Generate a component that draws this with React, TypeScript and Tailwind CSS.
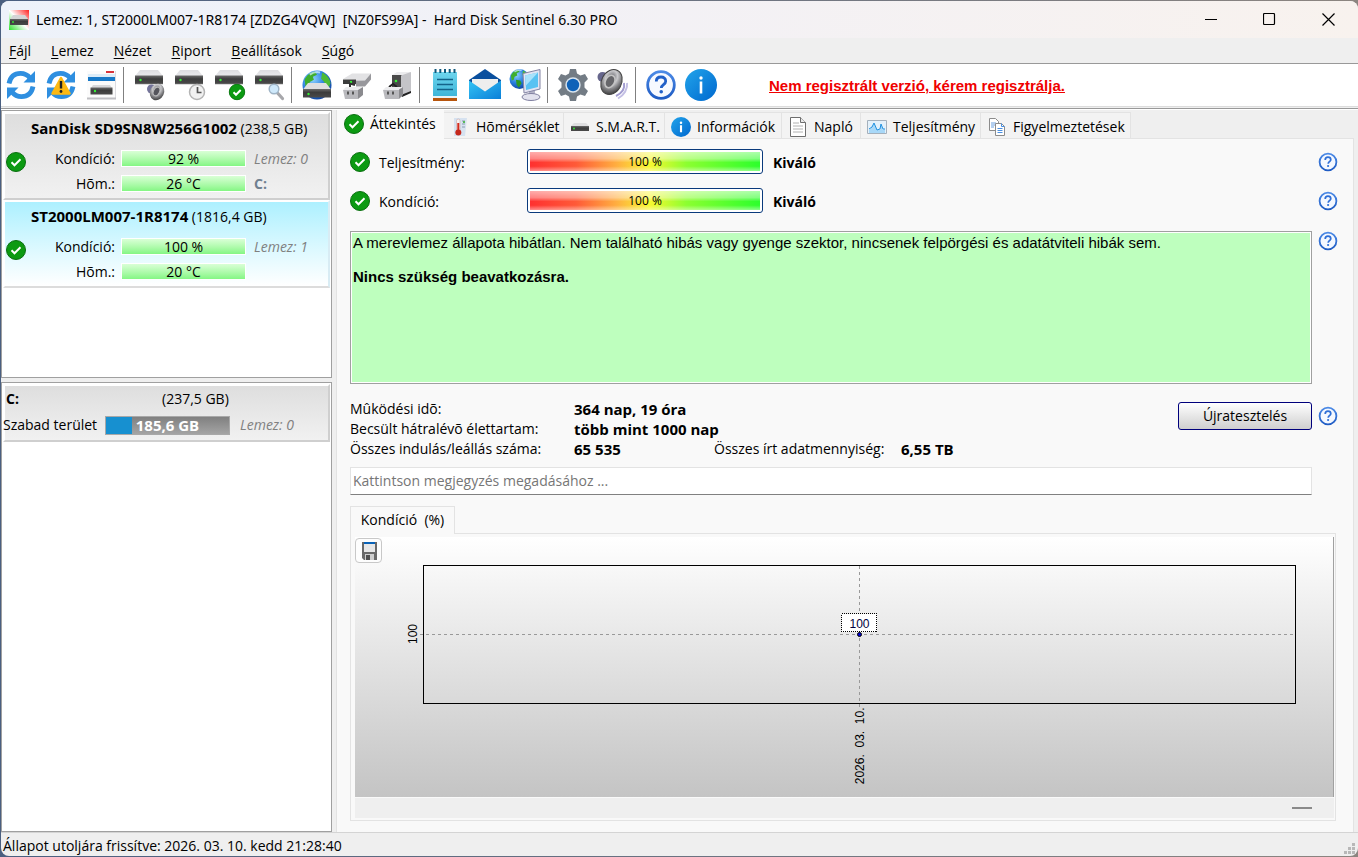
import { useState } from "react";
import type { ReactNode } from "react";

const menuItems = ["Fájl", "Lemez", "Nézet", "Riport", "Beállítások", "Súgó"];

const disks = [
  {
    name: "SanDisk SD9SN8W256G1002",
    size: "(238,5 GB)",
    health: "92 %",
    temp: "26 °C",
    index: "Lemez: 0",
    letter: "C:",
  },
  {
    name: "ST2000LM007-1R8174",
    size: "(1816,4 GB)",
    health: "100 %",
    temp: "20 °C",
    index: "Lemez: 1",
    letter: "",
  },
];

/** Gradients shared by every icon */
function Gradients() {
  return (
    <svg width="0" height="0" className="absolute" aria-hidden="true">
      <defs>
        <linearGradient id="lid" x1="0" y1="0" x2="0" y2="1">
          <stop offset="0" stopColor="#dcdcdf" />
          <stop offset="1" stopColor="#e9e9ec" />
        </linearGradient>
        <linearGradient id="body" x1="0" y1="0" x2="0" y2="1">
          <stop offset="0" stopColor="#6a6a6a" />
          <stop offset="0.4" stopColor="#3c3c3c" />
          <stop offset="1" stopColor="#4a4a4a" />
        </linearGradient>
        <linearGradient id="info" x1="0" y1="0" x2="1" y2="1">
          <stop offset="0" stopColor="#22a4ea" />
          <stop offset="1" stopColor="#0068cf" />
        </linearGradient>
        <linearGradient id="help" x1="0" y1="0" x2="0" y2="1">
          <stop offset="0" stopColor="#4c8ae6" />
          <stop offset="1" stopColor="#1f5cc4" />
        </linearGradient>
        <linearGradient id="mail" x1="0" y1="0" x2="1" y2="1">
          <stop offset="0" stopColor="#35c4f5" />
          <stop offset="1" stopColor="#0a7fd8" />
        </linearGradient>
        <linearGradient id="note" x1="0" y1="0" x2="0" y2="1">
          <stop offset="0" stopColor="#6fd6ee" />
          <stop offset="1" stopColor="#3cb4d8" />
        </linearGradient>
        <linearGradient id="logo" x1="1" y1="0" x2="0" y2="1">
          <stop offset="0" stopColor="#ff1e1e" />
          <stop offset="0.5" stopColor="#ffffff" />
          <stop offset="1" stopColor="#2fe02f" />
        </linearGradient>
        <radialGradient id="globe" cx="0.35" cy="0.3" r="0.8">
          <stop offset="0" stopColor="#8fd4ff" />
          <stop offset="0.5" stopColor="#2a7fe0" />
          <stop offset="1" stopColor="#0a3a98" />
        </radialGradient>
        <radialGradient id="cone" cx="0.4" cy="0.35" r="0.7">
          <stop offset="0" stopColor="#5a5a60" />
          <stop offset="0.4" stopColor="#c9c9cc" />
          <stop offset="0.7" stopColor="#7d7d80" />
          <stop offset="1" stopColor="#3a3a3a" />
        </radialGradient>
      </defs>
    </svg>
  );
}

function Check({ classes = "size-5" }: { classes?: string }) {
  return (
    <svg viewBox="0 0 20 20" className={`${classes} shrink-0`} aria-hidden="true">
      <circle cx="10" cy="10" r="9.5" fill="#0c9a12" stroke="#0a6f10" />
      <path d="M5.5 10.3l3 3 6-6" fill="none" stroke="#fff" strokeWidth="2" />
    </svg>
  );
}

function Help({ classes = "size-5" }: { classes?: string }) {
  return (
    <svg viewBox="0 0 20 20" className={`${classes} shrink-0`} aria-hidden="true">
      <circle cx="10" cy="10" r="8.4" fill="#f4f8ff" stroke="url(#help)" strokeWidth="1.8" />
      <path
        d="M7.2 7.9c0-1.8 1.2-2.7 2.8-2.7s2.8 1 2.8 2.5c0 1.9-2.6 2.1-2.6 4"
        fill="none"
        stroke="#2f6fd6"
        strokeWidth="1.7"
      />
      <circle cx="10.1" cy="14" r="1.1" fill="#2f6fd6" />
    </svg>
  );
}

function Info({ classes = "size-5" }: { classes?: string }) {
  return (
    <svg viewBox="0 0 32 32" className={`${classes} shrink-0`} aria-hidden="true">
      <circle cx="16" cy="16" r="16" fill="url(#info)" />
      <circle cx="16" cy="9" r="2" fill="#fff" />
      <path d="M16 13v11.5" stroke="#fff" strokeWidth="3.4" />
    </svg>
  );
}

function DriveShape() {
  return (
    <>
      <path d="M11 5h18l5 6H6z" fill="url(#lid)" />
      <path d="M6 10.5h28v8.5H6z" fill="url(#body)" />
      <path d="M6 19h28" stroke="#8a8a8a" strokeWidth="0.6" />
      <circle cx="11.5" cy="15" r="1.2" fill="#35f035" />
    </>
  );
}

function Arrows() {
  return (
    <g fill="none" stroke="#2f8fe0" strokeWidth="4.8">
      <path d="M8 18.5C9.5 11 13.5 8.4 19.5 8.4c4 0 7 1.4 9.5 4.6" />
      <path d="M32 21.5C30.5 29 26.5 31.6 20.5 31.6c-4 0-7-1.4-9.5-4.6" />
      <path d="M34 6v11.5H22.5z" fill="#2f8fe0" stroke="none" />
      <path d="M6 34V22.5h11.5z" fill="#2f8fe0" stroke="none" />
    </g>
  );
}

function Globe({ cx, cy, r }: { cx: number; cy: number; r: number }) {
  return (
    <g transform={`translate(${cx} ${cy}) scale(${r / 14})`}>
      <circle r="14" fill="url(#globe)" />
      <path d="M-12-5c2-4 5-7 10-8l2 3-4 2 1 3-4 2-1 4-3 1z" fill="#3fae2e" />
      <path d="M5-12c4 2 7 5 8 10l-2 6-3-2-1-5-3-3z" fill="#4cbb36" />
      <path d="M-5 1l6 1 2 4-4 6-3-4z" fill="#2f9a26" />
      <path d="M-7-10c3-2 7-3 10-2" stroke="#d8f3ff" strokeWidth="2" fill="none" opacity="0.7" />
    </g>
  );
}

const tools: Record<string, ReactNode> = {
  Frissítés: <Arrows />,
  "Teljes frissítés": (
    <>
      <Arrows />
      <path
        d="M20 13l8.5 15.5h-17z"
        fill="#fdb913"
        stroke="#fdb913"
        strokeWidth="2.5"
        strokeLinejoin="round"
      />
      <path d="M20 16v7.5" stroke="#222" strokeWidth="2.4" />
      <circle cx="20" cy="26.5" r="1.4" fill="#222" />
    </>
  ),
  Részletek: (
    <>
      <path d="M6 6h29v28H6z" fill="#fbfbfb" />
      <path d="M34.5 6v28" stroke="#dcdce0" />
      <path d="M7 12h27v4H7z" fill="#1779c8" />
      <path d="M7 9h27v3H7z" fill="#dcecf8" />
      <path d="M25 6h8v2h-8z" fill="#d8343c" />
      <path d="M12 20h17l2 3H10z" fill="#d8d8da" />
      <path d="M9.5 22.500h22v7h-22z" fill="url(#body)" />
      <circle cx="14" cy="26" r="1.2" fill="#35f035" />
      <path d="M6 33.500h29" stroke="#c0c0c4" strokeWidth="2" />
    </>
  ),
  Hangszint: (
    <>
      <DriveShape />
      <circle cx="22.5" cy="24" r="4.5" fill="#74749a" />
      <ellipse cx="28" cy="27" rx="7" ry="8.5" transform="rotate(25 28 27)" fill="url(#cone)" />
      <ellipse cx="27.5" cy="26.5" rx="3" ry="4.5" transform="rotate(25 27.5 26.5)" fill="#55555c" stroke="#bbb" />
    </>
  ),
  Időzítés: (
    <>
      <DriveShape />
      <circle cx="28" cy="27" r="7.5" fill="#f1f1f1" stroke="#b4b4b4" strokeWidth="1.5" />
      <path d="M28.5 22v5.500h4" fill="none" stroke="#555" strokeWidth="1.7" />
    </>
  ),
  Teszt: (
    <>
      <DriveShape />
      <circle cx="28" cy="27" r="7.7" fill="#0c9a12" stroke="#0a7a10" />
      <path d="M24.5 27.3l2.5 2.5 4.7-4.8" fill="none" stroke="#fff" strokeWidth="2" />
    </>
  ),
  Keresés: (
    <>
      <DriveShape />
      <path d="M28.5 28l5 5.5" stroke="#a7a7ab" strokeWidth="3.2" strokeLinecap="round" />
      <circle cx="25" cy="24" r="4.8" fill="#cfe9fb" stroke="#9fb4c6" strokeWidth="1.5" />
    </>
  ),
  Hálózat: (
    <>
      <Globe cx={20} cy={20} r={14.5} />
      <path d="M11 18h18l5 6.5H6z" fill="#dedee0" />
      <path d="M6 24h28v8.5H6z" fill="url(#body)" />
      <circle cx="11.5" cy="29" r="1.2" fill="#35f035" />
    </>
  ),
  "USB lemez": (
    <>
      <path d="M6 14l9-5.500h19l-6 7z" fill="#e2e2e4" />
      <path d="M19 15.500h9l6-7v6l-6 7h-9z" fill="#98989c" />
      <path d="M6 14.500h13v4.500H6z" fill="#3c3c3c" />
      <circle cx="14" cy="17" r="1.2" fill="#35f035" />
      <path d="M18 20l-5-1.500v4" stroke="#333" strokeWidth="2" fill="none" />
      <path d="M6 25l3-3h17l-4 4z" fill="#ececee" />
      <path d="M6 25h15v9H8z" fill="#b9b9bd" />
      <path d="M21 25l5-3v8l-5 4z" fill="#8a8a8e" />
      <path d="M10 26.500h2v3h-2zM15 26.500h2v3h-2z" fill="#555" />
    </>
  ),
  "Külső lemez": (
    <>
      <path d="M15 10l5-3h14l-5 3.500z" fill="#ececee" />
      <path d="M15 10h10v17H15z" fill="#4a4a4a" />
      <path d="M24 10.500l10-3.500v20l-10 4z" fill="#c4c4c8" />
      <path d="M24 30l10-4v2l-9 4z" fill="#222" />
      <circle cx="19" cy="16" r="1.3" fill="#35f035" />
      <path d="M12 22l4-3 4 3" stroke="#222" strokeWidth="2" fill="none" />
      <path d="M6 25l3-3h17l-4 3z" fill="#ececee" />
      <path d="M6 25h16v9H8z" fill="#b9b9bd" />
      <path d="M22 25l4-3v8l-4 4z" fill="#8a8a8e" />
      <path d="M10 26.500h2v3h-2zM15 26.500h2v3h-2z" fill="#555" />
    </>
  ),
  Jegyzet: (
    <>
      <path d="M8 7h24v25H8z" fill="url(#note)" />
      <path d="M8 31h24v2H8z" fill="#e8f4f8" />
      <path d="M8 33h24v3H8z" fill="#b8560e" />
      <path d="M10.5 4v4M15.3 4v4M20 4v4M24.700 4v4M29.500 4v4" stroke="#11597c" strokeWidth="2" />
      <path d="M12 14.500h16M12 19.500h16M12 24.500h16" stroke="#14638a" strokeWidth="1.7" />
    </>
  ),
  Levél: (
    <>
      <path d="M4 15L20 4l16 11v5H4z" fill="#0a4f9e" />
      <path d="M7 14h26v10L20 27 7 24z" fill="#eeeeee" />
      <path d="M4 15.500l16 11 16-11V34H4z" fill="url(#mail)" />
    </>
  ),
  "Távoli elérés": (
    <>
      <Globe cx={14.5} cy={14} r={10} />
      <path d="M24 24l6-1v8h-6z" fill="#b4b4c8" />
      <ellipse cx="26" cy="32" rx="9" ry="3.500" fill="#e2e2ee" stroke="#8080a0" />
      <path d="M18 8.500l17-4v19.500l-16 4z" fill="#e4e4f2" stroke="#8484a4" />
      <path d="M20 10.500l13-3v14.500l-12 3z" fill="#59c2f2" />
      <path d="M20 10.500l13-3-12 13z" fill="#a9e2fb" />
    </>
  ),
  Beállítás: (
    <>
      <path
        d="M17 4h6l1 4.500 3.500 2 4.500-1.500 3 5-3.500 3.500v5l3.500 3.500-3 5-4.500-1.500-3.500 2-1 4.500h-6l-1-4.500-3.500-2L8 31l-3-5 3.500-3.500v-5L5 14l3-5 4.500 1.500 3.500-2z"
        fill="#737c85"
      />
      <circle cx="20" cy="20" r="7.7" fill="#d9e4ee" />
      <circle cx="20" cy="20" r="6.2" fill="#0e62b8" />
    </>
  ),
  Hang: (
    <>
      <path d="M34 18c1 6-3 12-9 15.500" stroke="#c3bfe4" strokeWidth="2" fill="none" />
      <path d="M31 18c1 5-2 10-8 13" stroke="#a39dd0" strokeWidth="2" fill="none" />
      <circle cx="9.500" cy="12" r="5" fill="#66668c" />
      <ellipse cx="18.5" cy="17" rx="10" ry="13" transform="rotate(28 18.5 17)" fill="url(#cone)" stroke="#444" />
      <ellipse cx="17" cy="16.5" rx="4.5" ry="6.5" transform="rotate(28 17 16.5)" fill="#66666a" stroke="#c4c4c4" strokeWidth="1.5" />
    </>
  ),
  Súgó: (
    <>
      <circle cx="20" cy="20" r="13.3" fill="#f6f9ff" stroke="url(#help)" strokeWidth="2.8" />
      <path
        d="M15.3 16.5c0-3 2-4.5 4.7-4.5s4.7 1.600 4.700 4.200c0 3.300-4.400 3.400-4.400 6.700"
        fill="none"
        stroke="#2160c8"
        strokeWidth="2.8"
      />
      <circle cx="20.2" cy="26.8" r="1.8" fill="#2160c8" />
    </>
  ),
  Információ: (
    <>
      <circle cx="20" cy="20" r="16" fill="url(#info)" />
      <circle cx="20" cy="13" r="1.700" fill="#fff" />
      <path d="M20 16.500v12" stroke="#fff" strokeWidth="2.600" />
    </>
  ),
};

const toolGroups = [
  ["Frissítés", "Teljes frissítés", "Részletek"],
  ["Hangszint", "Időzítés", "Teszt", "Keresés"],
  ["Hálózat", "USB lemez", "Külső lemez"],
  ["Jegyzet", "Levél", "Távoli elérés"],
  ["Beállítás", "Hang"],
  ["Súgó", "Információ"],
];

const tabs = [
  { label: "Áttekintés", icon: <Check />, width: "w-[108px]" },
  {
    label: "Hõmérséklet",
    width: "w-[120px]",
    icon: (
      <svg viewBox="0 0 20 20" className="size-5 shrink-0">
        <path d="M4 1h13l-2 18H4z" fill="#d6e2f0" />
        <path d="M12 4h3M12 7h3M12 10h3" stroke="#8a9ab0" />
        <path d="M13 4h2v2h-2z" fill="#57b85a" />
        <rect x="6.5" y="2" width="3.500" height="13" rx="1.7" fill="#f6f0f0" stroke="#c9a7a7" strokeWidth="0.6" />
        <path d="M8.300 6v9" stroke="#d42a1c" strokeWidth="2" />
        <circle cx="8.300" cy="15.500" r="3" fill="#c5281c" />
      </svg>
    ),
  },
  {
    label: "S.M.A.R.T.",
    width: "w-[101px]",
    icon: (
      <svg viewBox="0 0 20 20" className="size-5 shrink-0">
        <path d="M4 6h12l3 3H1z" fill="#dedee0" />
        <path d="M1 9h18v5H1z" fill="url(#body)" />
        <circle cx="4" cy="11.5" r="0.9" fill="#35f035" />
      </svg>
    ),
  },
  { label: "Információk", icon: <Info />, width: "w-[117px]" },
  {
    label: "Napló",
    width: "w-[79px]",
    icon: (
      <svg viewBox="0 0 20 20" className="size-5 shrink-0">
        <path d="M2.500 0.500h10l5 5v14h-15z" fill="#fff" stroke="#6e6e6e" />
        <path d="M12.500 0.500v5h5" fill="#e9e9e9" stroke="#6e6e6e" />
        <path d="M5 6h6M5 9h10M5 12h10M5 15h10" stroke="#b2b2b2" />
      </svg>
    ),
  },
  {
    label: "Teljesítmény",
    width: "w-[120px]",
    icon: (
      <svg viewBox="0 0 20 20" className="size-5 shrink-0">
        <path d="M0.500 3.500h19v13H0.500z" fill="#e4f1fb" stroke="#a4b0bc" />
        <path d="M2 13l3-3 2-4 3 7 3 0 1-5 2 5 2-1v4H2z" fill="#a8d8f8" />
        <path d="M2 12l3-2 2-4 3 7 3-1 1-5 2 5 2 0" fill="none" stroke="#1e90e0" />
      </svg>
    ),
  },
  {
    label: "Figyelmeztetések",
    width: "w-[150px]",
    icon: (
      <svg viewBox="0 0 20 20" className="size-5 shrink-0">
        <path d="M2.500 1.500h6l3 3v9h-9z" fill="#fff" stroke="#8c8c8c" />
        <path d="M4 6h5M4 8h5M4 10h3" stroke="#6aa0e0" />
        <path d="M8.500 6.500h6l3 3v9h-9z" fill="#fff" stroke="#8c8c8c" />
        <path d="M14.500 6.500v3h3M10.500 11.500h5M10.500 13.500h5M10.500 15.500h5" fill="none" stroke="#4a90e2" />
      </svg>
    ),
  },
];

function Gauge({ value }: { value: string }) {
  return (
    <span className="flex h-[17px] w-[125px] items-center justify-center border border-white bg-linear-to-b from-[#d9ffd6] to-[#84f684]">
      {value}
    </span>
  );
}

function Rating({ label, value }: { label: string; value: string }) {
  return (
    <div className="flex h-[25px] items-center">
      <Check />
      <span className="ml-[9px] w-[148px] shrink-0 pt-0.5">{label}</span>
      <span className="h-[25px] w-[236px] shrink-0 rounded-[3px] border border-[#0a3a7c] bg-white p-0.5">
        <span className="flex h-full items-center justify-center bg-[linear-gradient(to_bottom,rgba(255,255,255,0.6),rgba(255,255,255,0.4)_35%,rgba(255,255,255,0)_55%,rgba(255,255,255,0)_75%,rgba(255,255,255,0.45)),linear-gradient(to_right,#ff3030,#ff5a38_20%,#ffb040_38%,#f8f830_52%,#8cff30_68%,#2cff2c)] text-xs">
          {value}
        </span>
      </span>
      <b className="ml-2.5 pt-0.5">Kiváló</b>
      <button type="button" aria-label="Súgó" className="ml-auto">
        <Help />
      </button>
    </div>
  );
}

function HealthChart() {
  return (
    <div className="border-r border-[#a0a0a0] bg-linear-to-b from-white to-[#c4c4c4] pl-[68px] pr-[37px]">
      <div className="h-7" />
      <div className="h-[139px] border border-black">
        <svg className="h-full w-full overflow-visible font-['Liberation_Sans',sans-serif]">
          <line x1="-4" x2="100%" y1="50%" y2="50%" stroke="#999" strokeDasharray="3 3" shapeRendering="crispEdges" />
          <line x1="50%" x2="50%" y1="0" y2="141" stroke="#999" strokeDasharray="3 3" shapeRendering="crispEdges" />
          <text x="-68" y="-7" transform="rotate(-90)" textAnchor="middle" className="fill-black text-xs">
            100
          </text>
          <svg x="50%" y="50%" className="overflow-visible">
            <rect
              x="-18"
              y="-21"
              width="35"
              height="18"
              fill="#fff"
              stroke="#000"
              strokeDasharray="1 1"
              shapeRendering="crispEdges"
            />
            <text y="-7" textAnchor="middle" className="fill-[#000040] text-xs">
              100
            </text>
            <circle r="2" fill="#0000d0" stroke="#000" />
            <text x="-73" y="4" transform="rotate(-90)" textAnchor="end" className="whitespace-pre fill-black text-xs">
              {"2026.  03.  10."}
            </text>
          </svg>
        </svg>
      </div>
      <div className="h-[93px]" />
    </div>
  );
}

function App() {
  const [tab, setTab] = useState("Áttekintés");
  const [disk, setDisk] = useState(1);
  const [comment, setComment] = useState("");

  return (
    <div className="flex min-h-screen bg-linear-to-r from-[#4a5f80] to-[#8c8580] py-px pl-px font-['Open_Sans',sans-serif] text-sm leading-5 text-black">
      <Gradients />
      <div className="flex flex-1 flex-col overflow-hidden rounded-lg bg-[#efefef]">
        <header className="flex h-[37px] items-center bg-linear-to-r from-[#edf2fa] via-[#f3f1f5] to-[#f8f2ee] pl-2">
          <svg viewBox="0 0 20 20" className="size-5 shrink-0">
            <path d="M0 0h20v20H0z" fill="url(#logo)" />
            <path d="M4 5h12l3 4H1z" fill="#d4d4d6" />
            <path d="M1 9h18v6H1z" fill="url(#body)" />
            <circle cx="4" cy="12" r="0.9" fill="#35f035" />
          </svg>
          <h1 className="ml-[7px] whitespace-pre font-['Noto_Sans',sans-serif]">
            {"Lemez: 1, ST2000LM007-1R8174 [ZDZG4VQW]  [NZ0FS99A] -  Hard Disk Sentinel 6.30 PRO"}
          </h1>
          <div className="ml-auto flex">
            <button type="button" aria-label="Kis méret" className="flex h-9 w-[58px] items-center justify-center">
              <svg width="13" height="13">
                <path d="M0 6.500h12" stroke="#000" />
              </svg>
            </button>
            <button type="button" aria-label="Teljes méret" className="flex h-9 w-[59px] items-center justify-center">
              <svg width="13" height="13">
                <rect x="0.500" y="0.500" width="11" height="11" rx="1" fill="none" stroke="#000" strokeWidth="1.200" />
              </svg>
            </button>
            <button type="button" aria-label="Bezárás" className="flex h-9 w-[59px] items-center justify-center">
              <svg width="13" height="13">
                <path d="M0.500 0.500l12 12M12.500 0.500l-12 12" stroke="#000" strokeWidth="1.200" />
              </svg>
            </button>
          </div>
        </header>

        <nav className="flex h-[26px] items-center border-b border-[#999]">
          {menuItems.map((item) => (
            <button key={item} type="button" className="px-2.5 first:pl-2">
              <span className="underline underline-offset-2">{item[0]}</span>
              {item.slice(1)}
            </button>
          ))}
        </nav>

        <div className="flex h-[43px] items-center border-b border-[#dcdcdc] bg-white">
          {toolGroups.map((group, i) => (
            <div key={group[0]} className="flex items-center">
              {i > 0 && <span className="ml-0.5 h-9 w-1.5 border-l border-[#808080]" />}
              {group.map((name) => (
                <button key={name} type="button" aria-label={name} className="size-10">
                  <svg viewBox="0 0 40 40" className="size-10">
                    {tools[name]}
                  </svg>
                </button>
              ))}
            </div>
          ))}
          <a
            href="#register"
            className="ml-12 pt-0.5 font-['Liberation_Sans',sans-serif] text-[15px] font-bold text-[#f00000] underline"
          >
            Nem regisztrált verzió, kérem regisztrálja.
          </a>
        </div>
        <div className="mt-px h-0.5 border-t border-[#999] bg-white" />

        <div className="flex flex-1">
          <aside className="flex w-[331px] shrink-0 flex-col gap-1">
            <div className="h-[268px] border border-[#a0a0a0] bg-white p-px">
              {disks.map((item, i) => (
                <button
                  key={item.name}
                  type="button"
                  onClick={() => setDisk(i)}
                  className={`flex h-[88px] w-full flex-col border-2 border-l-white border-t-white pt-1 text-left ${
                    disk === i
                      ? "border-b-[#dcdcdc] border-r-[#d8ecf4] bg-linear-to-b from-[#acf0ff] to-white"
                      : "border-b-[#cfcfcf] border-r-[#cfcfcf] bg-linear-to-b from-[#dedede] to-[#f1f1f1]"
                  }`}
                >
                  <span className="pl-[26px]">
                    <b className="text-[15px] leading-5">{item.name}</b> {item.size}
                  </span>
                  <span className="mt-[7px] flex items-start">
                    <span className="w-[22px] pl-px pt-1.5">
                      <Check />
                    </span>
                    <span className="grid grid-cols-[88px_125px_auto] items-center gap-x-1.5 text-right leading-[25px]">
                      <span>Kondíció:</span>
                      <Gauge value={item.health} />
                      <i className="pl-0.5 text-left text-[#808080]">{item.index}</i>
                      <span>Hõm.:</span>
                      <Gauge value={item.temp} />
                      <b className="pl-0.5 text-left text-[#708090]">{item.letter}</b>
                    </span>
                  </span>
                </button>
              ))}
            </div>

            <div className="flex-1 border border-[#a0a0a0] bg-white p-px">
              <div className="h-[58px] border-2 border-b-[#cfcfcf] border-l-white border-r-[#cfcfcf] border-t-white bg-linear-to-b from-[#dedede] to-[#f1f1f1] pt-[3px]">
                <div className="flex">
                  <b className="w-[157px] pl-px">C:</b>
                  <span>(237,5 GB)</span>
                </div>
                <div className="mt-1.5 flex items-center gap-2">
                  <span className="-ml-0.5 w-24 whitespace-nowrap">Szabad terület</span>
                  <span className="-ml-0.5 flex h-[19px] w-[125px] items-center justify-center border border-[#a8a8a8] bg-[linear-gradient(to_right,#1790d0_21%,transparent_21%),linear-gradient(to_bottom,#808080,#a4a4a4)] text-[15px] font-bold text-white">
                    185,6 GB
                  </span>
                  <i className="ml-0.5 text-[#808080]">Lemez: 0</i>
                </div>
              </div>
            </div>
          </aside>

          <main className="ml-1 mr-1 flex flex-1 flex-col">
            <div role="tablist" className="flex h-[29px] items-stretch">
              {tabs.map((item) => (
                <button
                  key={item.label}
                  type="button"
                  role="tab"
                  aria-selected={tab === item.label}
                  onClick={() => setTab(item.label)}
                  className={`flex items-center gap-1.5 whitespace-nowrap border-[#e3e3e3] ${item.width} ${
                    tab === item.label
                      ? "border-l bg-[#f9f9f9] pb-px pl-[7px]"
                      : "mt-0.5 border-b border-r border-t bg-[#f3f3f3] pl-1.5 pt-0.5"
                  }`}
                >
                  {item.icon}
                  {item.label}
                </button>
              ))}
              <span className="flex-1 border-b border-[#e3e3e3]" />
            </div>

            <div className="flex flex-1 flex-col border-l border-r border-[#e3e3e3] bg-[#f9f9f9] pb-[11px] pl-[13px] pr-[15px]">
              <div className="mt-2.5 flex flex-col gap-3.5 pb-[18px]">
                <Rating label="Teljesítmény:" value="100 %" />
                <Rating label="Kondíció:" value="100 %" />
              </div>

              <div className="flex items-start gap-1.5">
                <div className="h-[153px] flex-1 border border-[#a0a0a0] bg-[#beffbe] px-0.5 pt-0.5 font-['Liberation_Sans',sans-serif] text-[15px] leading-[17px] shadow-[inset_0_0_0_1px_#fff]">
                  <p>
                    A merevlemez állapota hibátlan. Nem található hibás vagy gyenge szektor, nincsenek felpörgési és
                    adatátviteli hibák sem.
                  </p>
                  <p className="mt-[17px] font-bold">Nincs szükség beavatkozásra.</p>
                </div>
                <button type="button" aria-label="Súgó">
                  <Help />
                </button>
              </div>

              <div className="mt-[15px] flex items-start">
                <dl className="grid grid-cols-[224px_140px_187px_auto] whitespace-nowrap">
                  <dt>Mûködési idõ:</dt>
                  <dd className="col-span-3 text-[15px] font-bold leading-5">364 nap, 19 óra</dd>
                  <dt>Becsült hátralévõ élettartam:</dt>
                  <dd className="col-span-3 text-[15px] font-bold leading-5">több mint 1000 nap</dd>
                  <dt>Összes indulás/leállás száma:</dt>
                  <dd className="text-[15px] font-bold leading-5">65 535</dd>
                  <dt>Összes írt adatmennyiség:</dt>
                  <dd className="text-[15px] font-bold leading-5">6,55 TB</dd>
                </dl>
                <div className="ml-auto mt-[3px] flex items-center gap-1.5">
                  <button
                    type="button"
                    className="h-7 w-[134px] rounded-[3px] border border-[#00007c] bg-linear-to-b from-white to-[#cfcfcf]"
                  >
                    Újratesztelés
                  </button>
                  <button type="button" aria-label="Súgó">
                    <Help />
                  </button>
                </div>
              </div>

              <input
                type="text"
                aria-label="Megjegyzés"
                value={comment}
                onChange={(e) => setComment(e.target.value)}
                placeholder="Kattintson megjegyzés megadásához ..."
                className="mr-[26px] mt-2 h-7 border border-[#e3e3e3] border-b-[#808080] bg-white px-0.5 pb-0.5 placeholder:text-[#767676]"
              />

              <div className="mr-0.5 mt-[11px] flex">
                <button
                  type="button"
                  className="h-7 w-[105px] whitespace-pre border border-b-0 border-[#e3e3e3] pb-0.5"
                >
                  {"Kondíció  (%)"}
                </button>
                <span className="flex-1 border-b border-[#e3e3e3]" />
              </div>
              <section className="mr-0.5 flex flex-1 flex-col border border-t-0 border-[#e3e3e3] pb-0.5 pl-1 pr-px pt-[3px]">
                <div className="relative">
                  <HealthChart />
                  <button
                    type="button"
                    aria-label="Mentés"
                    className="absolute left-0 top-px flex h-[25px] w-[27px] items-center justify-center rounded-[4px] border border-[#c8c8c8] bg-[#fdfdfd]"
                  >
                    <svg width="18" height="18">
                      <path d="M2 0h15v18H4l-2-2z" fill="#6a6a6a" />
                      <path d="M4 0h11v2H4z" fill="#0a63b8" />
                      <path d="M4 2h11v8H4z" fill="#e8e8e8" />
                      <path d="M5 12h9v6H5z" fill="#cfcfcf" />
                      <path d="M6 13h4v5H6z" fill="#505050" />
                    </svg>
                  </button>
                </div>
                <div className="mt-px flex flex-1 items-center justify-end bg-[#efefef] pr-[22px]">
                  <span className="h-0.5 w-5 bg-[#8a8a8a]" />
                </div>
              </section>
            </div>
          </main>
        </div>

        <footer className="flex h-6 items-center justify-between border-t border-[#d4d4d4] pl-0.5">
          <span className="pt-0.5">Állapot utoljára frissítve: 2026. 03. 10. kedd 21:28:40</span>
          <svg width="12" height="12" className="mr-0.5 mt-2">
            <path d="M8 0h3v3H8zM4 4h3v3H4zM8 4h3v3H8zM0 8h3v3H0zM4 8h3v3H4zM8 8h3v3H8z" fill="#b8b8b8" />
          </svg>
        </footer>
      </div>
    </div>
  );
}

export default App;
